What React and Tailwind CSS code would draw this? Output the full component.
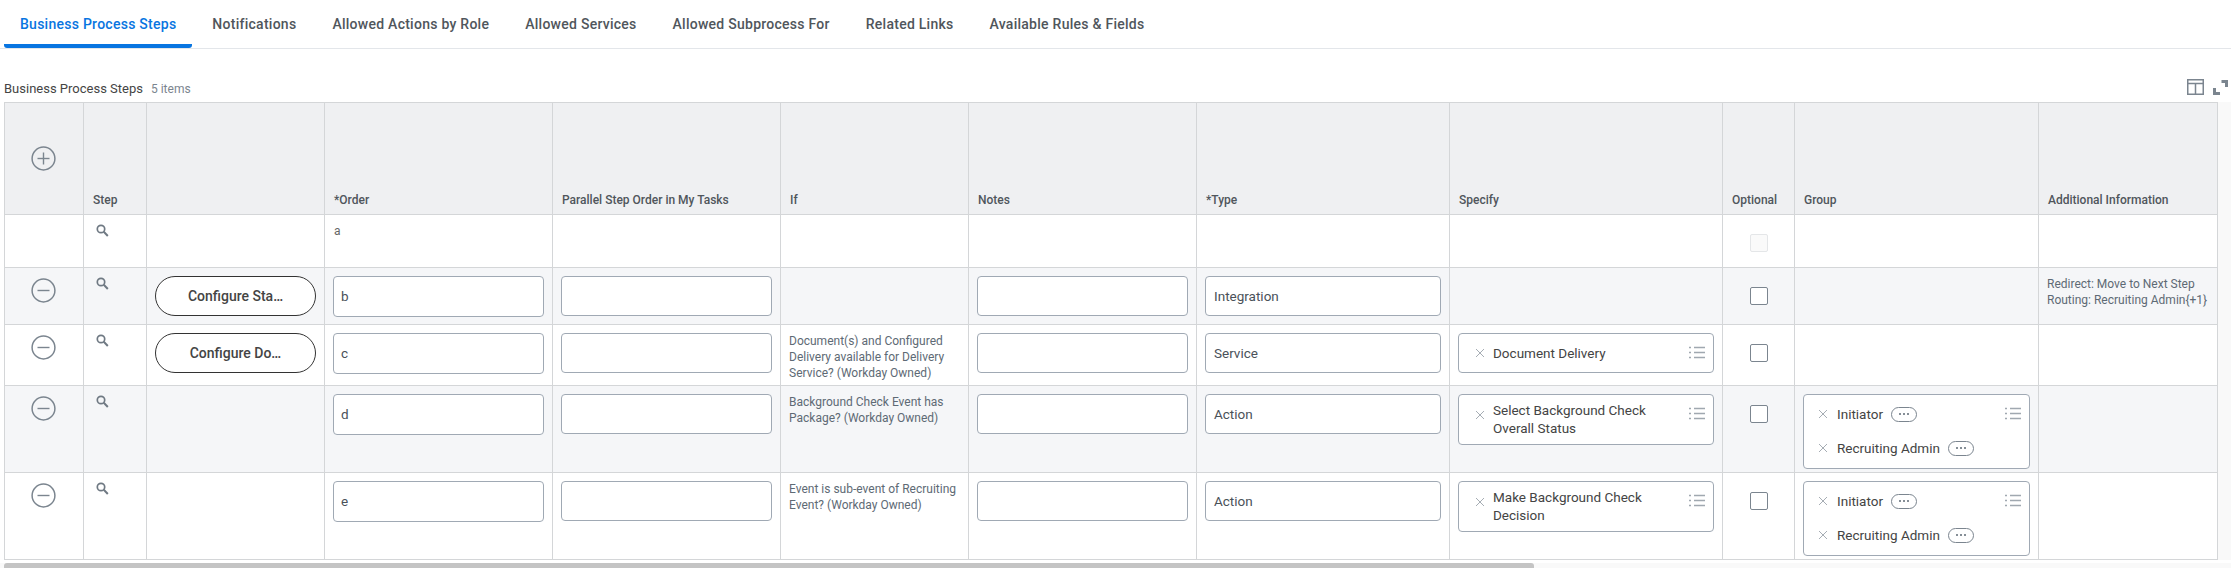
import React from 'react';

const tabs = [
  'Business Process Steps',
  'Notifications',
  'Allowed Actions by Role',
  'Allowed Services',
  'Allowed Subprocess For',
  'Related Links',
  'Available Rules & Fields',
];

const rows = [
  { id: 'a', height: 'h-[53px]', order: 'a', readOnly: true },
  {
    id: 'b',
    height: 'h-[57px]',
    shaded: true,
    order: 'b',
    button: 'Configure Sta…',
    type: 'Integration',
    info: ['Redirect: Move to Next Step', 'Routing: Recruiting Admin{+1}'],
  },
  {
    id: 'c',
    height: 'h-[61px]',
    order: 'c',
    button: 'Configure Do…',
    condition: 'Document(s) and Configured Delivery available for Delivery Service? (Workday Owned)',
    type: 'Service',
    specify: 'Document Delivery',
  },
  {
    id: 'd',
    height: 'h-[87px]',
    shaded: true,
    order: 'd',
    condition: 'Background Check Event has Package? (Workday Owned)',
    type: 'Action',
    specify: 'Select Background Check Overall Status',
    multi: true,
    group: ['Initiator', 'Recruiting Admin'],
  },
  {
    id: 'e',
    height: 'h-[87px]',
    order: 'e',
    condition: 'Event is sub-event of Recruiting Event? (Workday Owned)',
    type: 'Action',
    specify: 'Make Background Check Decision',
    multi: true,
    group: ['Initiator', 'Recruiting Admin'],
  },
];

const headers = [
  'Step',
  '',
  '*Order',
  'Parallel Step Order in My Tasks',
  'If',
  'Notes',
  '*Type',
  'Specify',
  'Optional',
  'Group',
  'Additional Information',
];

const RoundIcon = ({ plus }) => (
  <svg width="25" height="25" viewBox="0 0 25 25" fill="none" stroke="#7b858f" className="block mx-auto -translate-x-px">
    <circle cx="12.5" cy="12.5" r="11.4" strokeWidth="1.5" />
    <path d="M6.5 12.5h12" strokeWidth="1.4" />
    {plus && <path d="M12.5 6.5v12" strokeWidth="1.4" />}
  </svg>
);

const SearchIcon = () => (
  <svg width="13" height="13" viewBox="0 0 13 13" fill="none" stroke="#6f7983" className="block">
    <circle cx="5" cy="5" r="3.7" strokeWidth="1.7" />
    <path d="M7.8 7.8l4 4.2" strokeWidth="2" />
  </svg>
);

const CloseIcon = () => (
  <svg width="10" height="10" viewBox="0 0 10 10" stroke="#a6adb4" strokeWidth="1" className="block shrink-0">
    <path d="M1 1l8 8M9 1l-8 8" />
  </svg>
);

const ListIcon = () => (
  <svg width="16" height="13" viewBox="0 0 16 13" stroke="#a0a8b0" strokeWidth="1.6" className="block shrink-0">
    <path d="M0 1.5h2M5 1.5h11M0 6.5h2M5 6.5h11M0 11.5h2M5 11.5h11" />
  </svg>
);

const Field = ({ value, tall }) => (
  <div
    className={`${tall ? 'h-[41px] pl-[7px]' : 'h-[40px] pl-2'} flex items-center pr-2 bg-white border border-[#a0a9b4] rounded-[4px] text-[13.5px] text-[#4a5159]`}
  >
    {value}
  </div>
);

const SpecifyBox = ({ text, multi }) => (
  <div className="w-[256px] min-h-[40px] flex items-center pl-[16px] pr-[8px] pt-[6px] pb-[7px] bg-white border border-[#a0a9b4] rounded-[4px]">
    <span className={multi ? 'self-start mt-[9px]' : ''}>
      <CloseIcon />
    </span>
    <span className="flex-1 pl-[8px] pr-4 text-[13.5px] leading-[18px] text-[#444444]">{text}</span>
    <span className="self-start mt-[6px]">
      <ListIcon />
    </span>
  </div>
);

const GroupBox = ({ items }) => (
  <div className="flex items-start pt-[2px] pb-[3px] pr-[8px] bg-white border border-[#a0a9b4] rounded-[4px]">
    <div className="flex-1">
      {items.map((item) => (
        <div key={item} className="h-[34px] flex items-center pl-[14px]">
          <CloseIcon />
          <span className="ml-[9px] text-[13.5px] text-[#444444]">{item}</span>
          <span className="ml-[8px] w-[26px] h-[15px] flex items-center justify-center gap-[2px] border border-[#7b858f] rounded-full">
            <i className="w-[2px] h-[2px] rounded-full bg-[#5e6a75]" />
            <i className="w-[2px] h-[2px] rounded-full bg-[#5e6a75]" />
            <i className="w-[2px] h-[2px] rounded-full bg-[#5e6a75]" />
          </span>
        </div>
      ))}
    </div>
    <span className="mt-[10px]">
      <ListIcon />
    </span>
  </div>
);

const cell = 'border-r border-b border-[#d4d6d8] align-top p-0';

export default function App() {
  return (
    <div className="w-[2231px] h-[568px] overflow-hidden bg-white font-[Roboto,sans-serif]">
      {/* Tabs */}
      <nav className="h-[49px] flex gap-1 pl-1 border-b border-[#e3e6ea]">
        {tabs.map((tab, i) => (
          <div
            key={tab}
            className={`h-12 flex items-center px-4 text-sm font-medium tracking-[0.26px] border-b-4 pt-1 ${
              i === 0 ? 'text-[#0875e1] border-[#0875e1] rounded-b-[3px]' : 'text-[#50565c] border-transparent'
            }`}
          >
            {tab}
          </div>
        ))}
      </nav>

      {/* Grid title */}
      <div className="h-[53px] flex items-end justify-between pl-1 pr-[3px] pb-[4px]">
        <div className="flex items-baseline gap-[8px]">
          <span className="text-[13px] text-[#444444]">Business Process Steps</span>
          <span className="text-xs text-[#7b858f]">5 items</span>
        </div>
        <div className="flex items-center gap-[9px] mb-[3px]">
          <svg width="17" height="16" viewBox="0 0 17 16" fill="none" stroke="#7b858f" strokeWidth="1.5">
            <rect x="0.75" y="0.75" width="15.5" height="14.5" />
            <path d="M0.75 4.5h15.5M8.5 4.5v10.7" />
          </svg>
          <svg width="15" height="15" viewBox="0 0 15 15" fill="none" stroke="#7b858f" strokeWidth="3">
            <path d="M8.5 1.5h5V7M1.5 8v5.5H7" />
          </svg>
        </div>
      </div>

      {/* Grid */}
      <div className="flex pl-1 bg-white">
        <table className="table-fixed w-[2214px] border-separate border-spacing-0 shrink-0">
          <colgroup>
            <col className="w-[80px]" />
            <col className="w-[63px]" />
            <col className="w-[178px]" />
            <col className="w-[228px]" />
            <col className="w-[228px]" />
            <col className="w-[188px]" />
            <col className="w-[228px]" />
            <col className="w-[253px]" />
            <col className="w-[273px]" />
            <col className="w-[72px]" />
            <col className="w-[244px]" />
            <col className="w-[179px]" />
          </colgroup>
          <thead>
            <tr className="h-[113px]">
              <th className="border border-[#d4d6d8] bg-[#eff0f2] align-middle">
                <RoundIcon plus />
              </th>
              {headers.map((label, i) => (
                <th
                  key={i}
                  className="border-t border-r border-b border-[#d4d6d8] bg-[#eff0f2] text-left text-xs font-medium text-[#50565c] pl-[9px] pr-1 pb-[6px] align-bottom"
                >
                  {label}
                </th>
              ))}
            </tr>
          </thead>
          <tbody>
            {rows.map((row) => (
              <tr key={row.id} className={`${row.height} ${row.shaded ? 'bg-[#f5f6f8]' : 'bg-white'}`}>
                <td className={`${cell} border-l pt-[10px]`}>{!row.readOnly && <RoundIcon />}</td>
                <td className={`${cell} pl-[12px] pt-[9px]`}>
                  <SearchIcon />
                </td>
                <td className={`${cell} px-2 pt-2`}>
                  {row.button && (
                    <button className="w-[161px] h-[40px] bg-white border border-[#333333] rounded-full text-sm font-medium text-[#444444]">
                      {row.button}
                    </button>
                  )}
                </td>
                <td className={`${cell} px-2 pt-2`}>
                  {row.readOnly ? (
                    <div className="text-xs text-[#666666] pl-px leading-4">{row.order}</div>
                  ) : (
                    <Field value={row.order} tall />
                  )}
                </td>
                <td className={`${cell} px-2 pt-2`}>{!row.readOnly && <Field />}</td>
                <td className={`${cell} pl-2 pr-1 pt-2 text-xs leading-4 text-[#5e6a75]`}>{row.condition}</td>
                <td className={`${cell} px-2 pt-2`}>{!row.readOnly && <Field />}</td>
                <td className={`${cell} px-2 pt-2`}>{row.type && <Field value={row.type} />}</td>
                <td className={`${cell} px-2 pt-2`}>
                  {row.specify && <SpecifyBox text={row.specify} multi={row.multi} />}
                </td>
                <td className={`${cell} pt-[19px]`}>
                  <div
                    className={`w-[18px] h-[18px] mx-auto rounded-[2px] border ${
                      row.readOnly ? 'bg-[#fafafa] border-[#e4e6e8]' : 'bg-white border-[#7b858f]'
                    }`}
                  />
                </td>
                <td className={`${cell} px-2 pt-2`}>{row.group && <GroupBox items={row.group} />}</td>
                <td className={`${cell} pl-2 pr-1 pt-2 text-xs leading-4 text-[#5e6a75]`}>
                  {row.info && row.info.map((line) => <div key={line}>{line}</div>)}
                </td>
              </tr>
            ))}
          </tbody>
        </table>
        <div className="flex-1 bg-[#f9f9f9]" />
      </div>

      {/* Horizontal scrollbar */}
      <div className="mt-[3px] h-[5px] pl-1 bg-[#f9f9f9]">
        <div className="w-[1530px] h-full bg-[#c4c4c4] rounded-t-[3px]" />
      </div>
    </div>
  );
}
